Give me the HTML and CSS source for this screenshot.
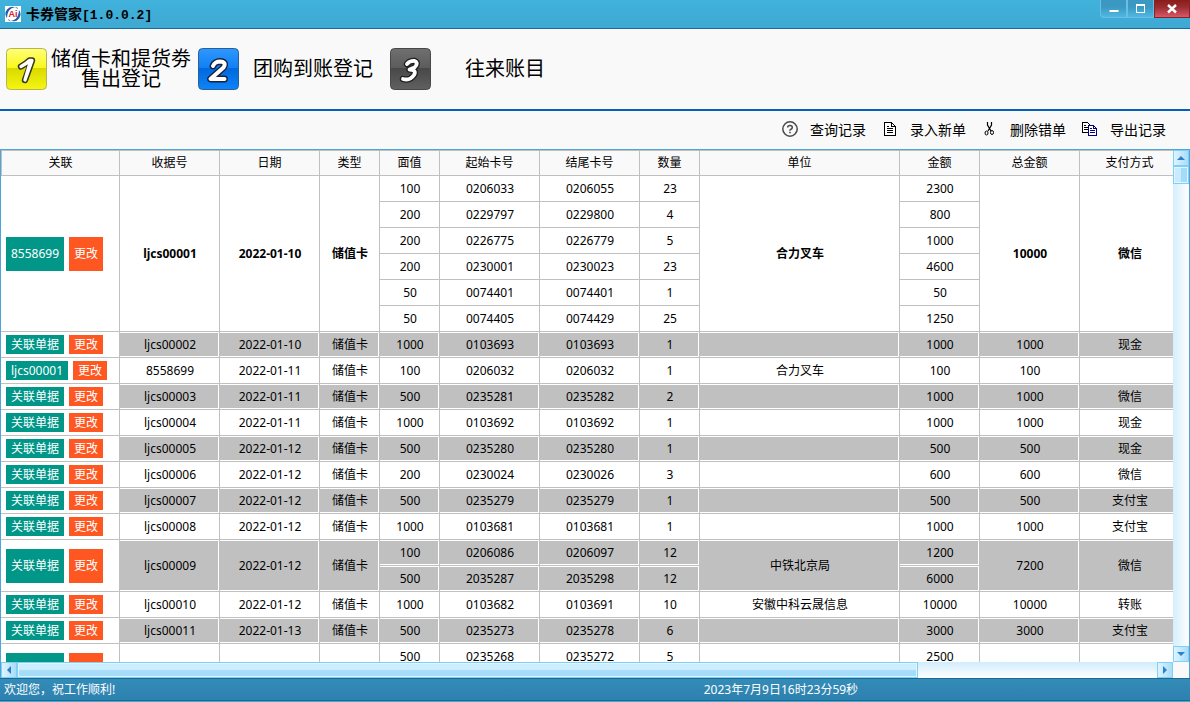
FILE: index.html
```html
<!DOCTYPE html>
<html lang="zh-CN">
<head>
<meta charset="utf-8">
<title>卡券管家</title>
<link rel="stylesheet" href="styles.css">
</head>
<body>
<div class="window">
  <header class="titlebar">
    <svg class="logo" viewBox="0 0 16 16" aria-hidden="true">
      <rect width="16" height="16" fill="#fff"/>
      <path d="M2 12A7 7 0 0 1 10 1.200C5 2 2.500 5 2 12Z" fill="#1d5fae"/>
      <path d="M14 4A7 7 0 0 1 6 14.800C11 14 13.500 11 14 4Z" fill="#1d5fae"/>
      <path d="M3 13.500L5.500 15M10.500 1.200L13 2.500" stroke="#5b8fd0" stroke-width="1"/>
      <text x="8" y="11" text-anchor="middle" class="logo-text">Ai</text>
    </svg>
    <h1 class="title">卡券管家<span class="version">[1.0.0.2]</span></h1>
    <div class="controls">
      <button class="control" aria-label="最小化"><svg viewBox="0 0 12 12"><path d="M1.500 7h9v2h-9z" fill="#fff"/></svg></button>
      <button class="control" aria-label="最大化"><svg viewBox="0 0 12 12" shape-rendering="crispEdges"><path d="M1.500 2.500h8v7h-8z" fill="none" stroke="#fff"/><path d="M1 1h9v2H1z" fill="#fff"/></svg></button>
      <button class="control close" aria-label="关闭"><svg viewBox="0 0 12 12"><path d="M2 2l8 7.500M10 2L2 9.500" stroke="#fff" stroke-width="2.400"/></svg></button>
    </div>
  </header>

  <nav class="modules">
    <button class="module">
      <svg class="badge" viewBox="0 0 41 42" aria-hidden="true">
        <defs>
          <linearGradient id="yellow" x2="0" y2="1"><stop offset="0" stop-color="#ffff7a"/><stop offset=".47" stop-color="#f8f81c"/><stop offset=".48" stop-color="#d9d900"/><stop offset="1" stop-color="#f6f610"/></linearGradient>
          <linearGradient id="blue" x2="0" y2="1"><stop offset="0" stop-color="#2f98ff"/><stop offset=".47" stop-color="#1080f4"/><stop offset=".48" stop-color="#0068dc"/><stop offset="1" stop-color="#0e84fa"/></linearGradient>
          <linearGradient id="gray" x2="0" y2="1"><stop offset="0" stop-color="#707070"/><stop offset=".47" stop-color="#5c5c5c"/><stop offset=".48" stop-color="#484848"/><stop offset="1" stop-color="#606060"/></linearGradient>
        </defs>
        <rect x=".5" y=".5" width="40" height="41" rx="4" fill="url(#yellow)" stroke="#b4b454"/>
        <path d="M15 18.500Q20 16 23.500 12.500H26L19 32" fill="none" stroke="#35351c" stroke-width="6.400" stroke-linecap="round" stroke-linejoin="round"/>
        <path d="M15 18.500Q20 16 23.500 12.500H26L19 32L24 15" fill="none" stroke="#fff" stroke-width="3.400" stroke-linecap="round" stroke-linejoin="round"/>
      </svg>
      <span class="module-label">储值卡和提货劵<br>售出登记</span>
    </button>
    <button class="module">
      <svg class="badge" viewBox="0 0 41 42" aria-hidden="true">
        <rect x=".5" y=".5" width="40" height="41" rx="4" fill="url(#blue)" stroke="#2c5f96"/>
        <path d="M15 18Q17 13.500 22 13.500Q29 14 25.500 19.500L12.500 31H26.500" fill="none" stroke="#17233c" stroke-width="6.800" stroke-linecap="round" stroke-linejoin="round"/>
        <path d="M15 18Q17 13.500 22 13.500Q29 14 25.500 19.500L12.500 31H26.500" fill="none" stroke="#fff" stroke-width="4" stroke-linecap="round" stroke-linejoin="round"/>
      </svg>
      <span class="module-label">团购到账登记</span>
    </button>
    <button class="module">
      <svg class="badge" viewBox="0 0 41 42" aria-hidden="true">
        <rect x=".5" y=".5" width="40" height="41" rx="4" fill="url(#gray)" stroke="#484848"/>
        <path d="M17 16Q20 12.500 24.500 13Q29 15 24.500 19.500L19.500 21.500Q27 22 24 27Q20 33 13 31" fill="none" stroke="#202020" stroke-width="6.400" stroke-linecap="round" stroke-linejoin="round"/>
        <path d="M17 16Q20 12.500 24.500 13Q29 15 24.500 19.500L19.500 21.500Q27 22 24 27Q20 33 13 31" fill="none" stroke="#fff" stroke-width="3.800" stroke-linecap="round" stroke-linejoin="round"/>
      </svg>
      <span class="module-label">往来账目</span>
    </button>
  </nav>

  <div class="toolbar">
    <button class="tool">
      <svg viewBox="0 0 16 16" aria-hidden="true"><circle cx="8" cy="8" r="7.200" fill="none" stroke="#4a4a4a" stroke-width="1.500"/><path d="M5.700 6.500Q5.700 4.500 8 4.500T10.300 6.500Q10.300 7.600 9 8.200T8 9.800" fill="none" stroke="#4a4a4a" stroke-width="1.500"/><path d="M7.200 10.800h1.600v1.400H7.200z" fill="#4a4a4a"/></svg>
      查询记录
    </button>
    <button class="tool">
      <svg viewBox="0 0 16 16" aria-hidden="true" shape-rendering="crispEdges"><path d="M2.500 1.500h7l4 4v9h-11zM9.500 1.500v4h4" fill="#fff" stroke="#000"/><path d="M5 5.500h2M5 7.500h6M5 9.500h6M5 11.500h6" stroke="#000"/></svg>
      录入新单
    </button>
    <button class="tool">
      <svg viewBox="0 0 16 16" aria-hidden="true"><path d="M5.500 1v3l3.500 6M9.500 1v3L6 10" fill="none" stroke="#000" stroke-width="1.200"/><ellipse cx="4.500" cy="12" rx="1.500" ry="2" fill="none" stroke="#000"/><ellipse cx="10" cy="11.500" rx="1.500" ry="2" fill="none" stroke="#000"/></svg>
      删除错单
    </button>
    <button class="tool">
      <svg viewBox="0 0 16 16" aria-hidden="true" shape-rendering="crispEdges"><path d="M.5 1.500h5l3 3v7h-8z" fill="#fff" stroke="#000"/><path d="M2 4.500h2M2 6.500h4M2 8.500h4" stroke="#000"/><path d="M6.500 4.500h5l3 3v7h-8zM11.500 4.500v3h3" fill="#fff" stroke="#000080"/><path d="M8 7.500h2M8 9.500h5M8 11.500h5" stroke="#000080"/></svg>
      导出记录
    </button>
  </div>

  <main class="grid-frame">
    <div class="viewport">
      <table class="records">
        <colgroup>
          <col class="w-ops"><col class="w-100"><col class="w-100"><col class="w-60"><col class="w-60"><col class="w-100"><col class="w-100"><col class="w-60"><col class="w-200"><col class="w-80"><col class="w-100"><col class="w-100">
        </colgroup>
        <thead>
          <tr><th>关联</th><th>收据号</th><th>日期</th><th>类型</th><th>面值</th><th>起始卡号</th><th>结尾卡号</th><th>数量</th><th>单位</th><th>金额</th><th>总金额</th><th>支付方式</th></tr>
        </thead>
        <tbody>
          <tr><td class="ops" rowspan="6"><div class="actions"><button class="act link tall">8558699</button><button class="act edit tall">更改</button></div></td><td class="current" rowspan="6">ljcs00001</td><td class="current" rowspan="6">2022-01-10</td><td class="current" rowspan="6">储值卡</td><td>100</td><td>0206033</td><td>0206055</td><td>23</td><td class="current" rowspan="6">合力叉车</td><td>2300</td><td class="current" rowspan="6">10000</td><td class="current" rowspan="6">微信</td></tr>
          <tr><td>200</td><td>0229797</td><td>0229800</td><td>4</td><td>800</td></tr>
          <tr><td>200</td><td>0226775</td><td>0226779</td><td>5</td><td>1000</td></tr>
          <tr><td>200</td><td>0230001</td><td>0230023</td><td>23</td><td>4600</td></tr>
          <tr><td>50</td><td>0074401</td><td>0074401</td><td>1</td><td>50</td></tr>
          <tr><td>50</td><td>0074405</td><td>0074429</td><td>25</td><td>1250</td></tr>
          <tr class="alt"><td class="ops"><div class="actions"><button class="act link">关联单据</button><button class="act edit">更改</button></div></td><td>ljcs00002</td><td>2022-01-10</td><td>储值卡</td><td>1000</td><td>0103693</td><td>0103693</td><td>1</td><td></td><td>1000</td><td>1000</td><td>现金</td></tr>
          <tr><td class="ops"><div class="actions"><button class="act link">ljcs00001</button><button class="act edit">更改</button></div></td><td>8558699</td><td>2022-01-11</td><td>储值卡</td><td>100</td><td>0206032</td><td>0206032</td><td>1</td><td>合力叉车</td><td>100</td><td>100</td><td></td></tr>
          <tr class="alt"><td class="ops"><div class="actions"><button class="act link">关联单据</button><button class="act edit">更改</button></div></td><td>ljcs00003</td><td>2022-01-11</td><td>储值卡</td><td>500</td><td>0235281</td><td>0235282</td><td>2</td><td></td><td>1000</td><td>1000</td><td>微信</td></tr>
          <tr><td class="ops"><div class="actions"><button class="act link">关联单据</button><button class="act edit">更改</button></div></td><td>ljcs00004</td><td>2022-01-11</td><td>储值卡</td><td>1000</td><td>0103692</td><td>0103692</td><td>1</td><td></td><td>1000</td><td>1000</td><td>现金</td></tr>
          <tr class="alt"><td class="ops"><div class="actions"><button class="act link">关联单据</button><button class="act edit">更改</button></div></td><td>ljcs00005</td><td>2022-01-12</td><td>储值卡</td><td>500</td><td>0235280</td><td>0235280</td><td>1</td><td></td><td>500</td><td>500</td><td>现金</td></tr>
          <tr><td class="ops"><div class="actions"><button class="act link">关联单据</button><button class="act edit">更改</button></div></td><td>ljcs00006</td><td>2022-01-12</td><td>储值卡</td><td>200</td><td>0230024</td><td>0230026</td><td>3</td><td></td><td>600</td><td>600</td><td>微信</td></tr>
          <tr class="alt"><td class="ops"><div class="actions"><button class="act link">关联单据</button><button class="act edit">更改</button></div></td><td>ljcs00007</td><td>2022-01-12</td><td>储值卡</td><td>500</td><td>0235279</td><td>0235279</td><td>1</td><td></td><td>500</td><td>500</td><td>支付宝</td></tr>
          <tr><td class="ops"><div class="actions"><button class="act link">关联单据</button><button class="act edit">更改</button></div></td><td>ljcs00008</td><td>2022-01-12</td><td>储值卡</td><td>1000</td><td>0103681</td><td>0103681</td><td>1</td><td></td><td>1000</td><td>1000</td><td>支付宝</td></tr>
          <tr class="alt"><td class="ops" rowspan="2"><div class="actions"><button class="act link tall">关联单据</button><button class="act edit tall">更改</button></div></td><td rowspan="2">ljcs00009</td><td rowspan="2">2022-01-12</td><td rowspan="2">储值卡</td><td>100</td><td>0206086</td><td>0206097</td><td>12</td><td rowspan="2">中铁北京局</td><td>1200</td><td rowspan="2">7200</td><td rowspan="2">微信</td></tr>
          <tr class="alt"><td>500</td><td>2035287</td><td>2035298</td><td>12</td><td>6000</td></tr>
          <tr><td class="ops"><div class="actions"><button class="act link">关联单据</button><button class="act edit">更改</button></div></td><td>ljcs00010</td><td>2022-01-12</td><td>储值卡</td><td>1000</td><td>0103682</td><td>0103691</td><td>10</td><td>安徽中科云晟信息</td><td>10000</td><td>10000</td><td>转账</td></tr>
          <tr class="alt"><td class="ops"><div class="actions"><button class="act link">关联单据</button><button class="act edit">更改</button></div></td><td>ljcs00011</td><td>2022-01-13</td><td>储值卡</td><td>500</td><td>0235273</td><td>0235278</td><td>6</td><td></td><td>3000</td><td>3000</td><td>支付宝</td></tr>
          <tr><td class="ops" rowspan="2"><div class="actions"><button class="act link tall" aria-label="关联"></button><button class="act edit tall" aria-label="编辑"></button></div></td><td rowspan="2"></td><td rowspan="2"></td><td rowspan="2"></td><td>500</td><td>0235268</td><td>0235272</td><td>5</td><td rowspan="2"></td><td>2500</td><td rowspan="2"></td><td rowspan="2"></td></tr>
          <tr><td></td><td></td><td></td><td></td><td></td></tr>
        </tbody>
      </table>
    </div>
    <div class="scroll vertical">
      <button class="arrow" aria-label="向上"><svg viewBox="0 0 8 8"><path d="M0 6l4-4 4 4z"/></svg></button>
      <div class="track"><div class="thumb"></div></div>
      <button class="arrow" aria-label="向下"><svg viewBox="0 0 8 8"><path d="M0 2l4 4 4-4z"/></svg></button>
    </div>
    <div class="scroll horizontal">
      <button class="arrow" aria-label="向左"><svg viewBox="0 0 8 8"><path d="M6 0L2 4l4 4z"/></svg></button>
      <div class="track"><div class="thumb"></div></div>
      <button class="arrow" aria-label="向右"><svg viewBox="0 0 8 8"><path d="M2 0l4 4-4 4z"/></svg></button>
    </div>
  </main>

  <footer class="status">
    <span>欢迎您，祝工作顺利!</span>
    <span>2023年7月9日16时23分59秒</span>
  </footer>
</div>
</body>
</html>
```

FILE: styles.css
```css
* { box-sizing: border-box; }

body {
  margin: 0;
  background: #f9f9f9;
  color: #000;
  font: 12px/16px "Noto Sans", "Noto Sans CJK SC", sans-serif;
}

button {
  margin: 0;
  padding: 0;
  border: 0;
  background: none;
  color: inherit;
  font: inherit;
}

.window {
  display: flex;
  flex-direction: column;
  height: 100vh;
}

/* Title bar */
.titlebar {
  display: flex;
  align-items: center;
  flex: none;
  height: 29px;
  padding-left: 5px;
  border-bottom: 1px solid #1b6a94;
  background: linear-gradient(#40b2dc, #3ea9d2);
}

.logo { width: 16px; height: 16px; }

.logo-text {
  fill: #d8202c;
  font: bold 9px "Liberation Sans", sans-serif;
}

.title {
  flex: 1;
  margin: 0;
  padding-left: 5px;
  font: bold 14px/20px "Noto Sans CJK SC", sans-serif;
}

.version {
  font-family: "Liberation Mono", monospace;
  font-size: 13px;
}

.controls {
  display: flex;
  align-self: flex-start;
  height: 18px;
}

.control {
  display: grid;
  place-items: center;
  width: 27px;
  border: 1px solid #68c0e4;
  border-top: 0;
  background: linear-gradient(#3b98c2 0 40%, #50b8e2);
}

.control:first-child { border-radius: 0 0 0 4px; }
.control svg { width: 12px; height: 12px; }

.close {
  width: 36px;
  border-color: #8c2028;
  background: linear-gradient(#8c1c18, #982c30 40%, #d85866);
}

/* Module navigation */
.modules {
  display: flex;
  align-items: center;
  flex: none;
  gap: 7px;
  height: 82px;
  padding-left: 6px;
  border-bottom: 2px solid #0560bb;
}

.module {
  display: flex;
  align-items: center;
  gap: 4px;
  width: 185px;
}

.badge {
  flex: none;
  width: 41px;
  height: 42px;
}

.module-label {
  flex: 1;
  padding-bottom: 3px;
  font: 20px/20px "Noto Sans CJK SC", sans-serif;
  white-space: nowrap;
}

/* Toolbar */
.toolbar {
  display: flex;
  align-items: center;
  justify-content: flex-end;
  flex: none;
  gap: 16px;
  height: 38px;
  padding: 0 24px 2px 0;
}

.tool {
  display: flex;
  align-items: center;
  gap: 12px;
  font: 14px/20px "Noto Sans CJK SC", sans-serif;
}

.tool svg { width: 16px; height: 16px; }

/* Records grid */
.grid-frame {
  display: grid;
  grid-template: minmax(0, 1fr) 16px / minmax(0, 1fr) 16px;
  flex: 1;
  min-height: 0;
  border: 1px solid #4fa5da;
  border-bottom: 0;
}

.viewport {
  overflow: hidden;
  background: #fff;
}

.records {
  width: 1179px;
  border-spacing: 0;
  table-layout: fixed;
  text-align: center;
}

.w-ops { width: 119px; }
.w-60 { width: 60px; }
.w-80 { width: 80px; }
.w-100 { width: 100px; }
.w-200 { width: 200px; }

.records th,
.records td {
  height: 26px;
  padding: 0;
  border: solid #c0c0c0;
  border-width: 0 1px 1px 0;
  line-height: 12px;
  white-space: nowrap;
}

.records td:not(.ops) { padding-left: 1px; }

.records th {
  border-top-width: 1px;
  background: #f9f9f9;
  font-weight: normal;
}

.records th:first-child { border-left-width: 1px; }

.records .current { font-weight: bold; }

.alt td:not(.ops) {
  background: #c0c0c0;
  box-shadow: inset -1px -1px #fff, inset 0 1px #fff;
}

.actions {
  display: flex;
  gap: 5px;
  padding-left: 5px;
}

.act {
  min-width: 34px;
  height: 19px;
  padding: 0 5px;
  color: #fff;
}

.tall { height: 34px; }
.link { min-width: 58px; background: #009688; }
.edit { background: #ff5722; }

/* Scroll bars */
.scroll { display: flex; }

.vertical { flex-direction: column; }

.arrow {
  display: grid;
  place-items: center;
  flex: none;
  width: 16px;
  height: 16px;
  border: 1px solid #7fd0f8;
  background: linear-gradient(90deg, #dff4ff, #a8ddf8);
}

.arrow svg {
  width: 8px;
  height: 8px;
  fill: #2f7fc8;
}

.track { flex: 1; }

.thumb {
  border: 1px solid #7fd0f8;
  box-shadow: inset 0 0 0 1px #e0f5ff;
}

.vertical .track { background: linear-gradient(90deg, #d4eefc, #fff); }

.vertical .thumb {
  height: 18px;
  background: linear-gradient(90deg, #c8ecff 50%, #a4dbf8 50%);
}

.horizontal .track { background: linear-gradient(#d0ecfc, #fff); }

.horizontal .thumb {
  width: 79%;
  height: 16px;
  background: linear-gradient(#cdeeff 45%, #a6dcf8 55%);
}

/* Status bar */
.status {
  display: grid;
  grid-template-columns: 59fr 41fr;
  align-items: center;
  flex: none;
  height: 24px;
  padding-left: 4px;
  border-top: 1px solid #1b6a94;
  border-bottom: 1px solid #3ea9d2;
  background: linear-gradient(#338cb8, #2d80ad);
  box-shadow: inset 0 -1px #1b6a94;
  color: #fff;
}
```
